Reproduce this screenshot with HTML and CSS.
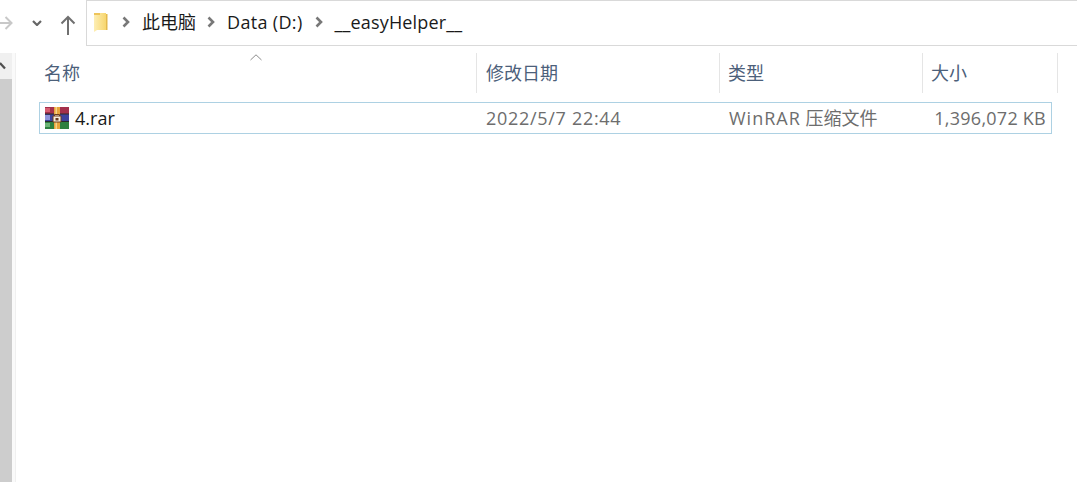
FILE: index.html
```html
<!DOCTYPE html>
<html lang="zh-CN">
<head>
<meta charset="utf-8">
<title>__easyHelper__</title>
<link rel="stylesheet" href="styles.css">
</head>
<body>
<div class="toolbar">
  <div class="nav">
    <svg class="ico-forward" width="13" height="16" viewBox="0 0 13 16"><path d="M0 8H11.5M5.5 2L11.5 8L5.5 14" fill="none" stroke="#c8c8c8" stroke-width="2"/></svg>
    <svg class="ico-down" width="10" height="6" viewBox="0 0 10 6"><path d="M1 1L5 5L9 1" fill="none" stroke="#666" stroke-width="2.2"/></svg>
    <svg class="ico-up" width="16" height="20" viewBox="0 0 16 20"><path d="M8 20V2M1.5 8.5L8 2L14.5 8.5" fill="none" stroke="#707070" stroke-width="2"/></svg>
  </div>
  <div class="address">
    <svg class="ico-folder" width="15" height="21" viewBox="0 0 15 21">
      <defs>
        <linearGradient id="folderFace" x1="0" y1="0" x2="1" y2="0">
          <stop offset="0" stop-color="#fdeeb4"/>
          <stop offset="1" stop-color="#f7d66e"/>
        </linearGradient>
      </defs>
      <path d="M1 1H13V18H4L1 20Z" fill="url(#folderFace)"/>
      <path d="M1 1H7V3H1Z" fill="#eec45a"/>
      <path d="M13 2H14.5V18H13Z" fill="#e3b94e"/>
    </svg>
    <svg class="sep" width="9" height="12" viewBox="0 0 9 12"><path d="M1.5 1.5L6 6L1.5 10.5" fill="none" stroke="#787878" stroke-width="2.6"/></svg>
    <span class="crumb crumb-cjk">此电脑</span>
    <svg class="sep" width="9" height="12" viewBox="0 0 9 12"><path d="M1.5 1.5L6 6L1.5 10.5" fill="none" stroke="#787878" stroke-width="2.6"/></svg>
    <span class="crumb crumb-latin">Data (D:)</span>
    <svg class="sep" width="9" height="12" viewBox="0 0 9 12"><path d="M1.5 1.5L6 6L1.5 10.5" fill="none" stroke="#787878" stroke-width="2.6"/></svg>
    <span class="crumb crumb-folder">__easyHelper__</span>
  </div>
</div>
<div class="main">
  <div class="rail">
    <div class="rail-btn">
      <svg class="thumb-arrow" width="8" height="8" viewBox="0 0 8 8"><path d="M0 1L5 6.5" fill="none" stroke="#505050" stroke-width="2.2"/></svg>
    </div>
    <div class="thumb"></div>
  </div>
  <div class="list">
    <div class="head">
      <div class="col col-name">名称<svg class="sort" width="12" height="7" viewBox="0 0 12 7"><path d="M0.5 6L6 0.8L11.5 6" fill="none" stroke="#8c8c8c" stroke-width="1"/></svg></div>
      <div class="col col-date">修改日期</div>
      <div class="col col-type">类型</div>
      <div class="col col-size">大小</div>
    </div>
    <div class="row">
      <div class="cell cell-name">
        <svg class="ico-rar" width="24" height="22" viewBox="0 0 24 22">
          <rect x="0" y="0" width="24" height="7" fill="#a3304c"/>
          <rect x="0" y="7" width="24" height="7" fill="#3d429e"/>
          <rect x="0" y="14" width="24" height="8" fill="#2e8040"/>
          <rect x="0" y="6.5" width="24" height="1" fill="#2a2a2a"/>
          <rect x="0" y="14" width="24" height="1" fill="#2a2a2a"/>
          <rect x="0" y="1" width="5" height="4" fill="#d65c70"/>
          <rect x="0" y="8" width="5" height="5" fill="#8f94da"/>
          <rect x="0" y="16" width="5" height="4" fill="#6cb476"/>
          <rect x="9" y="0" width="6" height="22" fill="#e8a53c"/>
          <rect x="10.5" y="0" width="1.5" height="22" fill="#f6d48a"/>
          <path d="M8 9H16V15H8ZM9.5 9V7.5H14.5V9" fill="#f6ecdc" stroke="#6b3b1e" stroke-width="1"/>
          <rect x="10.5" y="11" width="3" height="2.5" fill="#6b3b1e"/>
        </svg>
        <span>4.rar</span>
      </div>
      <div class="cell cell-date">2022/5/7 22:44</div>
      <div class="cell cell-type"><span class="type-latin">WinRAR</span> 压缩文件</div>
      <div class="cell cell-size">1,396,072 KB</div>
    </div>
  </div>
</div>
</body>
</html>
```
FILE: styles.css
```css
* { box-sizing: border-box; }
html, body { margin: 0; padding: 0; }
body {
  width: 1077px;
  height: 482px;
  overflow: hidden;
  background: #fff;
  font-family: "Noto Sans CJK SC", "Open Sans", sans-serif;
  font-size: 18px;
}
.toolbar { display: flex; height: 46px; }
.nav {
  width: 86px;
  flex: none;
  display: flex;
  align-items: center;
}
.ico-down { margin-left: 19px; }
.ico-up { margin-left: 18px; margin-top: 3px; }
.address {
  flex: 1;
  display: flex;
  align-items: center;
  border: 1px solid #d9d9d9;
  border-right: 0;
  padding-left: 6px;
  padding-bottom: 2px;
  color: #1a1a1a;
  font-family: "Open Sans", "Noto Sans CJK SC", sans-serif;
}
.ico-folder { margin-right: 14px; }
.sep { margin-right: 11px; }
.crumb { line-height: 24px; }
.crumb-cjk { margin-right: 11px; }
.crumb-latin { margin-right: 12px; letter-spacing: 0.33px; }
.crumb-folder { letter-spacing: 0.15px; }
.main { display: flex; height: 436px; }
.rail {
  width: 16px;
  flex: none;
  margin-top: 7px;
  background: #fafafa;
  border-right: 1px solid #f0f0f0;
}
.rail-btn {
  width: 12px;
  height: 26px;
  background: #f0f0f0;
  position: relative;
}
.thumb {
  width: 12px;
  height: 403px;
  background: #cdcdcd;
}
.thumb-arrow { position: absolute; left: 0; top: 9px; }
.list { flex: 1; padding-left: 23px; }
.head { display: flex; height: 56px; }
.col {
  position: relative;
  height: 40px;
  margin-top: 7px;
  padding-top: 5px;
  line-height: 28px;
  color: #4c607a;
  border-right: 1px solid #e5e5e5;
  font-size: 18px;
}
.col-name { width: 438px; padding-left: 5px; }
.col-date { width: 243px; padding-left: 9px; }
.col-type { width: 203px; padding-left: 8px; }
.col-size { width: 135px; padding-left: 8px; }
.sort { position: absolute; left: 211px; top: 1px; }
.row {
  display: flex;
  align-items: center;
  width: 1013px;
  height: 32px;
  background: #fff;
  border: 1px solid #add1e3;
  font-family: "Open Sans", "Noto Sans CJK SC", sans-serif;
  color: #6d6d6d;
}
.cell { white-space: nowrap; line-height: 30px; }
.cell-name { width: 437px; display: flex; align-items: center; padding-left: 5px; color: #1a1a1a; }
.ico-rar { margin-right: 6px; }
.cell-date { width: 243px; padding-left: 9px; letter-spacing: 0.7px; }
.cell-type { width: 206px; padding-left: 9px; }
.type-latin { letter-spacing: 1px; }
.cell-size { width: 125px; text-align: right; padding-right: 5px; letter-spacing: 0.25px; }
```
